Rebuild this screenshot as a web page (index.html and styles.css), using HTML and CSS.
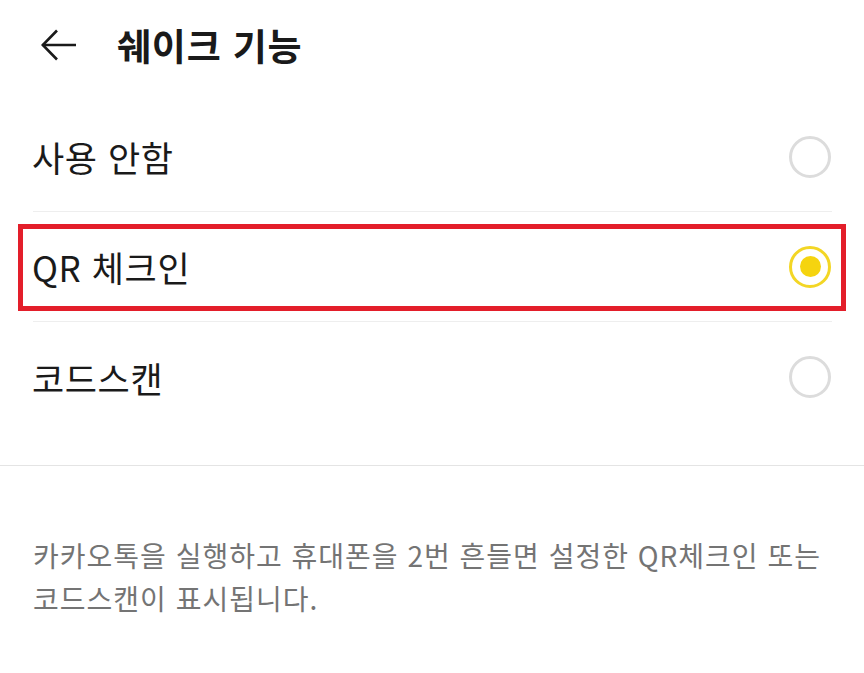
FILE: index.html
```html
<!DOCTYPE html>
<html lang="ko">
<head>
<meta charset="utf-8">
<link rel="stylesheet" href="styles.css">
</head>
<body>
<header class="header">
  <svg class="back" width="36" height="32" viewBox="0 0 36 32" fill="none" stroke="#1a1a1a" stroke-width="2.6" stroke-linecap="butt" stroke-linejoin="miter">
    <path d="M1.5 16H35"/>
    <path d="M16 1.5L1.8 16L16 30.5"/>
  </svg>
  <h1 class="title">쉐이크 기능</h1>
</header>
<ul class="options">
  <li class="option"><span class="label">사용 안함</span><span class="radio"></span></li>
  <li class="option selected"><span class="label">QR 체크인</span><span class="radio on"></span></li>
  <li class="option"><span class="label">코드스캔</span><span class="radio"></span></li>
</ul>
<div class="sep"></div>
<p class="desc">카카오톡을 실행하고 휴대폰을 2번 흔들면 설정한 QR체크인 또는 코드스캔이 표시됩니다.</p>
</body>
</html>
```
FILE: styles.css
```css
html, body {
  margin: 0;
  padding: 0;
  background: #ffffff;
}
body {
  font-family: "Noto Sans CJK KR", "Noto Sans", sans-serif;
  color: #1a1a1a;
  width: 864px;
}
.header {
  display: flex;
  align-items: center;
  height: 90px;
  padding-left: 41px;
  box-sizing: border-box;
}
.back {
  display: block;
  flex: none;
}
.title {
  margin: 0 0 0 40px;
  font-size: 37px;
  font-weight: 700;
  line-height: 1;
  letter-spacing: 0.8px;
}
.options {
  list-style: none;
  margin: 12px 0 0;
  padding: 0 32px 0 33px;
}
.option {
  position: relative;
  display: flex;
  align-items: center;
  justify-content: space-between;
  height: 110px;
  border-bottom: 1px solid #eeeeee;
  box-sizing: border-box;
}
.option:last-child {
  border-bottom: none;
}
.option.selected::after {
  content: "";
  position: absolute;
  left: -15px;
  right: -14px;
  top: 12px;
  bottom: 10px;
  border: 5px solid #e31e2a;
  pointer-events: none;
}
.label {
  font-size: 35px;
  line-height: 1;
  margin-left: -1px;
  letter-spacing: 0.6px;
}
.radio {
  width: 42px;
  height: 42px;
  box-sizing: border-box;
  border: 3px solid #dcdcdc;
  border-radius: 50%;
  margin-right: 1px;
  display: flex;
  align-items: center;
  justify-content: center;
}
.radio.on {
  border-color: #f3d625;
}
.radio.on::before {
  content: "";
  width: 21px;
  height: 21px;
  border-radius: 50%;
  background: #f5d40f;
}
.sep {
  margin-top: 33px;
  height: 1px;
  background: #e4e4e4;
}
.desc {
  margin: 68px 0 0;
  padding: 0 30px 0 33px;
  font-size: 28px;
  line-height: 43px;
  color: #747474;
  letter-spacing: 1px;
}
```
